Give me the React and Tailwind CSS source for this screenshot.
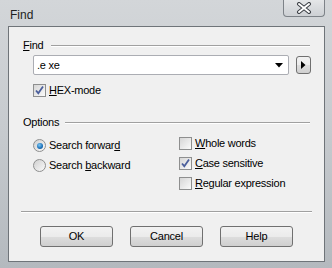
function Check({ checked }) {
  return (
    <span className="relative w-[13px] h-[13px] shrink-0 border border-[#8e8f8f] bg-gradient-to-br from-[#d6d6d6] to-[#fbfbfb] flex items-center justify-center">
      {checked && (
        <svg width="11" height="11" viewBox="0 0 11 11" className="absolute left-[0px] top-[0px]">
          <path d="M2 5.5 L4.3 8.2 L9 1.5" fill="none" stroke="#4b5f9c" strokeWidth="1.8" />
        </svg>
      )}
    </span>
  );
}

function Radio({ checked }) {
  return (
    <span className="w-[13px] h-[13px] shrink-0 rounded-full border border-[#8e8f8f] bg-gradient-to-br from-[#d0d0d0] to-[#fafafa] flex items-center justify-center">
      {checked && (
        <span className="w-[6px] h-[6px] rounded-full bg-[radial-gradient(circle_at_40%_35%,#7cc8f5,#1a6fb8_60%,#0b4a86)]" />
      )}
    </span>
  );
}

function U({ children }) {
  return <span className="underline underline-offset-[1px]">{children}</span>;
}

function Btn({ children }) {
  return (
    <button className="w-[73px] h-[21px] rounded-[3px] border border-[#707070] bg-[linear-gradient(#f2f2f2_0%,#ebebeb_50%,#dddddd_51%,#cfcfcf_100%)] text-[11px] text-black tracking-[-0.2px]">
      {children}
    </button>
  );
}

export default function App() {
  return (
    <div
      className="w-[332px] h-[268px] flex flex-col bg-gradient-to-b from-[#d3d6d9] via-[#c6cace] to-[#b4b9be] text-[11px] text-black tracking-[-0.25px]"
      style={{ fontFamily: '"Liberation Sans", Arial, sans-serif' }}
    >
      <div className="h-[26px] flex items-start shrink-0">
        <span className="ml-[10px] mt-[6px] text-[12px] tracking-normal text-[#1e1e1e]">Find</span>
        <div className="ml-auto mr-[7px] w-[42px] h-[17px] rounded-b-[4px] border border-t-0 border-[#7d8288] bg-gradient-to-b from-[#e4e6e8] to-[#cdd0d4] flex items-center justify-center">
          <svg width="16" height="12" viewBox="0 0 16 12">
            <path d="M3 2 L13 10 M13 2 L3 10" stroke="#3b3f45" strokeWidth="4" strokeLinecap="round" />
            <path d="M3 2 L13 10 M13 2 L3 10" stroke="#ffffff" strokeWidth="2" strokeLinecap="round" />
          </svg>
        </div>
      </div>

      <div className="ml-[8px] mr-[7px] mb-[6px] flex-1 border border-[#6f7479] bg-[#f0f0f0] flex flex-col">
        <div className="mt-[12px] h-[13px] flex items-center pl-[14px] pr-[14px]">
          <span><U>F</U>ind</span>
          <span className="ml-[8px] flex-1 h-[2px] border-t border-[#a0a0a0] border-b border-b-white" />
        </div>

        <div className="mt-[3px] flex items-center pl-[24px]">
          <div className="w-[256px] h-[20px] bg-white border border-[#abadb3] rounded-[2px] flex items-center pl-[3px] pr-[5px]">
            <span className="flex-1">.e xe</span>
            <svg width="8" height="5" viewBox="0 0 8 5">
              <path d="M0 0 H8 L4 4.5 Z" fill="#000" />
            </svg>
          </div>
          <div className="ml-[7px] w-[15px] h-[18px] rounded-[3px] border border-[#707070] bg-[linear-gradient(#f2f2f2_0%,#ebebeb_50%,#dddddd_51%,#cfcfcf_100%)] flex items-center justify-center">
            <svg width="5" height="8" viewBox="0 0 5 8">
              <path d="M0 0 L4.5 4 L0 8 Z" fill="#000" />
            </svg>
          </div>
        </div>

        <div className="mt-[9px] h-[13px] flex items-center pl-[24px] gap-[3px]">
          <Check checked />
          <span><U>H</U>EX-mode</span>
        </div>

        <div className="mt-[19px] h-[13px] flex items-center pl-[14px] pr-[14px]">
          <span>Options</span>
          <span className="ml-[6px] flex-1 h-[2px] border-t border-[#a0a0a0] border-b border-b-white" />
        </div>

        <div className="mt-[8px] flex pl-[24px]">
          <div className="w-[146px] pt-[2px] flex flex-col gap-[7px]">
            <div className="h-[13px] flex items-center gap-[3px]">
              <Radio checked />
              <span>Search forwar<U>d</U></span>
            </div>
            <div className="h-[13px] flex items-center gap-[3px]">
              <Radio />
              <span>Search <U>b</U>ackward</span>
            </div>
          </div>
          <div className="flex flex-col gap-[7px]">
            <div className="h-[13px] flex items-center gap-[3px]">
              <Check />
              <span><U>W</U>hole words</span>
            </div>
            <div className="h-[13px] flex items-center gap-[3px]">
              <Check checked />
              <span><U>C</U>ase sensitive</span>
            </div>
            <div className="h-[13px] flex items-center gap-[3px]">
              <Check />
              <span><U>R</U>egular expression</span>
            </div>
          </div>
        </div>

        <div className="mt-[21px] mx-[12px] h-[2px] border-t border-[#a0a0a0] border-b border-b-white" />

        <div className="mt-[13px] flex pl-[31px] gap-[17px]">
          <Btn>OK</Btn>
          <Btn>Cancel</Btn>
          <Btn>Help</Btn>
        </div>
      </div>
    </div>
  );
}
